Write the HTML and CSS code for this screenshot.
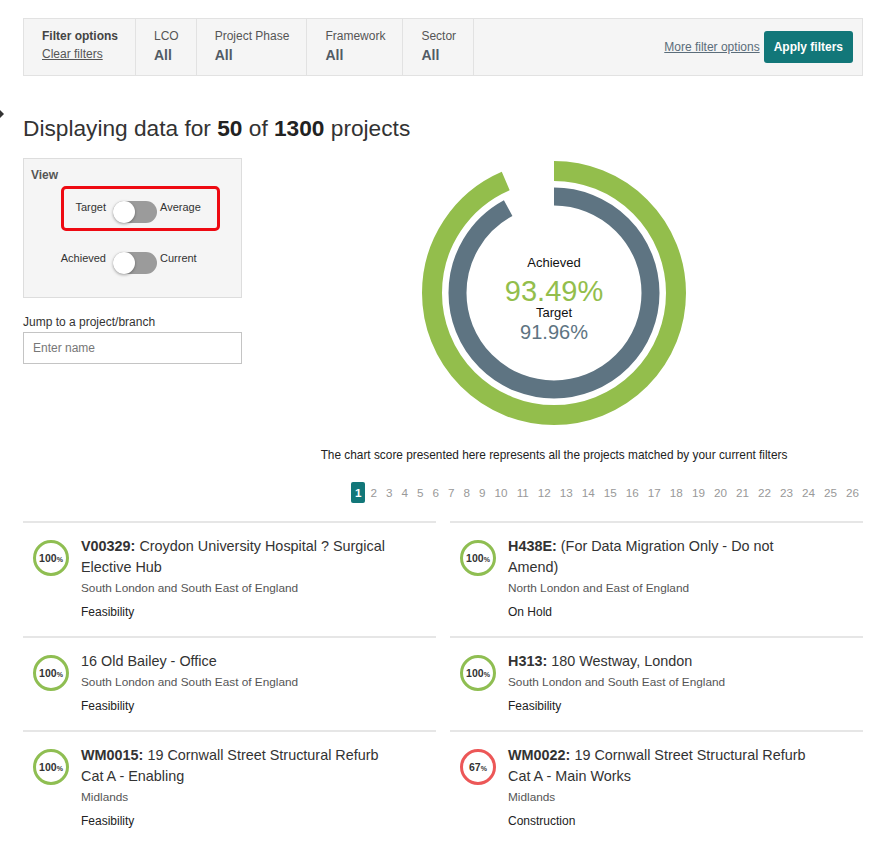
FILE: index.html
```html
<!DOCTYPE html>
<html lang="en">
<head>
  <meta charset="UTF-8" />
  <meta name="viewport" content="width=device-width, initial-scale=1.0"/>
  <title>Project Dashboard</title>
  <link rel="stylesheet" href="styles.css">
</head>
<body>

  <span class="side-tab"></span>

  <div class="page">

    <div class="filter-bar">
      <div class="filter-cell">
        <div class="filter-title">Filter options</div>
        <a class="clear-link" href="#">Clear filters</a>
      </div>
      <div class="filter-cell">
        <div class="filter-label">LCO</div>
        <div class="filter-value">All</div>
      </div>
      <div class="filter-cell">
        <div class="filter-label">Project Phase</div>
        <div class="filter-value">All</div>
      </div>
      <div class="filter-cell">
        <div class="filter-label">Framework</div>
        <div class="filter-value">All</div>
      </div>
      <div class="filter-cell">
        <div class="filter-label">Sector</div>
        <div class="filter-value">All</div>
      </div>
      <div class="filter-actions">
        <a class="more-link" href="#">More filter options</a>
        <button class="apply-btn">Apply filters</button>
      </div>
    </div>

    <h1 class="summary">Displaying data for <b>50</b> of <b>1300</b> projects</h1>

    <div class="overview">
      <div class="sidebar">
        <div class="view-panel">
          <div class="view-title">View</div>
          <div class="toggle-row highlight">
            <span class="toggle-left">Target</span>
            <span class="switch"><span class="knob"></span></span>
            <span class="toggle-right">Average</span>
          </div>
          <div class="toggle-row">
            <span class="toggle-left">Achieved</span>
            <span class="switch"><span class="knob"></span></span>
            <span class="toggle-right">Current</span>
          </div>
        </div>
        <label class="jump-label" for="jump">Jump to a project/branch</label>
        <input class="jump-input" id="jump" type="text" placeholder="Enter name" />
      </div>

      <div class="chart-area">
        <svg class="score-chart" width="264" height="264" viewBox="0 0 264 264">
          <circle class="ring-achieved" cx="132" cy="132" r="122" stroke-dasharray="716.6 766.5" transform="rotate(-90 132 132)" />
          <circle class="ring-target" cx="132" cy="132" r="96.5" stroke-dasharray="557.6 606.3" transform="rotate(-90 132 132)" />
          <text class="chart-label" x="132" y="105.5">Achieved</text>
          <text class="chart-main" x="132" y="139.5">93.49%</text>
          <text class="chart-label" x="132" y="155.5">Target</text>
          <text class="chart-sub" x="132" y="178">91.96%</text>
        </svg>
        <p class="chart-note">The chart score presented here represents all the projects matched by your current filters</p>
      </div>
    </div>

    <div class="pagination">
      <a class="page-link current">1</a>
      <a class="page-link">2</a>
      <a class="page-link">3</a>
      <a class="page-link">4</a>
      <a class="page-link">5</a>
      <a class="page-link">6</a>
      <a class="page-link">7</a>
      <a class="page-link">8</a>
      <a class="page-link">9</a>
      <a class="page-link">10</a>
      <a class="page-link">11</a>
      <a class="page-link">12</a>
      <a class="page-link">13</a>
      <a class="page-link">14</a>
      <a class="page-link">15</a>
      <a class="page-link">16</a>
      <a class="page-link">17</a>
      <a class="page-link">18</a>
      <a class="page-link">19</a>
      <a class="page-link">20</a>
      <a class="page-link">21</a>
      <a class="page-link">22</a>
      <a class="page-link">23</a>
      <a class="page-link">24</a>
      <a class="page-link">25</a>
      <a class="page-link">26</a>
    </div>

    <div class="project-list">
      <div class="project">
        <span class="badge">100<small>%</small></span>
        <div class="project-info">
          <div class="project-title"><b>V00329:</b> Croydon University Hospital ? Surgical Elective Hub</div>
          <div class="project-region">South London and South East of England</div>
          <div class="project-phase">Feasibility</div>
        </div>
      </div>
      <div class="project">
        <span class="badge">100<small>%</small></span>
        <div class="project-info">
          <div class="project-title"><b>H438E:</b> (For Data Migration Only - Do not Amend)</div>
          <div class="project-region">North London and East of England</div>
          <div class="project-phase">On Hold</div>
        </div>
      </div>
      <div class="project">
        <span class="badge">100<small>%</small></span>
        <div class="project-info">
          <div class="project-title">16 Old Bailey - Office</div>
          <div class="project-region">South London and South East of England</div>
          <div class="project-phase">Feasibility</div>
        </div>
      </div>
      <div class="project">
        <span class="badge">100<small>%</small></span>
        <div class="project-info">
          <div class="project-title"><b>H313:</b> 180 Westway, London</div>
          <div class="project-region">South London and South East of England</div>
          <div class="project-phase">Feasibility</div>
        </div>
      </div>
      <div class="project">
        <span class="badge">100<small>%</small></span>
        <div class="project-info">
          <div class="project-title"><b>WM0015:</b> 19 Cornwall Street Structural Refurb Cat A - Enabling</div>
          <div class="project-region">Midlands</div>
          <div class="project-phase">Feasibility</div>
        </div>
      </div>
      <div class="project">
        <span class="badge low">67<small>%</small></span>
        <div class="project-info">
          <div class="project-title"><b>WM0022:</b> 19 Cornwall Street Structural Refurb Cat A - Main Works</div>
          <div class="project-region">Midlands</div>
          <div class="project-phase">Construction</div>
        </div>
      </div>
    </div>

  </div>

</body>
</html>
```

FILE: styles.css
```css
body {
  margin: 0;
  font-family: "Liberation Sans", Arial, sans-serif;
  color: #333;
  background: #fff;
}
.side-tab {
  position: absolute;
  left: 0;
  top: 110px;
  border-left: 4px solid #333;
  border-top: 4px solid transparent;
  border-bottom: 4px solid transparent;
}
.page {
  width: 840px;
  margin-left: 23px;
  padding-top: 18px;
}

/* filter bar */
.filter-bar {
  display: flex;
  background: #f5f5f5;
  border: 1px solid #e2e2e2;
}
.filter-cell {
  padding: 9px 17px 11px 18px;
  border-right: 1px solid #e2e2e2;
}
.filter-title {
  font-size: 12px;
  line-height: 16px;
  font-weight: bold;
  color: #444;
}
.clear-link {
  display: block;
  margin-top: 2px;
  font-size: 12px;
  line-height: 16px;
  color: #555;
  text-decoration: underline;
}
.filter-label {
  font-size: 12px;
  line-height: 16px;
  color: #555;
}
.filter-value {
  margin-top: 3px;
  font-size: 14px;
  line-height: 17px;
  font-weight: bold;
  color: #515b64;
}
.filter-actions {
  margin-left: auto;
  display: flex;
  align-items: center;
  gap: 4px;
  padding-right: 9px;
}
.more-link {
  font-size: 12px;
  color: #5b6d7a;
  text-decoration: underline;
}
.apply-btn {
  height: 32px;
  padding: 0 10px;
  border: 0;
  border-radius: 3px;
  background: #127779;
  color: #fff;
  font: bold 12px "Liberation Sans", Arial, sans-serif;
  cursor: pointer;
}

.summary {
  margin: 39px 0 17px;
  font-size: 22.7px;
  line-height: 26px;
  font-weight: normal;
  color: #333;
}
.summary b {
  color: #222;
}

/* overview */
.overview {
  display: flex;
}
.sidebar {
  width: 219px;
  flex-shrink: 0;
}
.view-panel {
  background: #f5f5f5;
  border: 1px solid #ddd;
  padding: 8px 0 15px 7px;
}
.view-title {
  font-size: 12px;
  line-height: 16px;
  font-weight: bold;
  color: #555;
}
.toggle-row {
  display: grid;
  grid-template-columns: 42px auto auto;
  justify-content: start;
  align-items: start;
  box-sizing: border-box;
  width: 159px;
  margin: 6px 0 0 30px;
  padding: 12px 0 5px;
  border: 3px solid transparent;
  border-radius: 5px;
  font-size: 11px;
  line-height: 13px;
  color: #333;
}
.toggle-row.highlight {
  margin-top: 3px;
  border-color: #ee0a12;
}
.toggle-left {
  justify-self: end;
  white-space: nowrap;
}
.toggle-right {
  white-space: nowrap;
}
.switch {
  position: relative;
  width: 44px;
  height: 22px;
  margin: 0 3px 0 7px;
  border-radius: 11px;
  background: #9b9b9b;
}
.knob {
  position: absolute;
  left: 0;
  top: 0;
  width: 22px;
  height: 22px;
  border-radius: 50%;
  background: #fff;
  box-shadow: 0 1px 3px rgba(0,0,0,0.35);
}
.jump-label {
  display: block;
  margin-top: 16px;
  font-size: 12px;
  line-height: 16px;
  color: #333;
}
.jump-input {
  display: block;
  box-sizing: border-box;
  width: 219px;
  height: 32px;
  margin-top: 2px;
  padding: 0 9px;
  border: 1px solid #c4c4c4;
  font: 12px "Liberation Sans", Arial, sans-serif;
}
.jump-input::placeholder {
  color: #777;
}

.chart-area {
  flex: 1;
  padding-left: 3px;
}
.score-chart {
  display: block;
  margin: 3px auto 0;
}
.ring-achieved {
  fill: none;
  stroke: #93be4c;
  stroke-width: 20;
}
.ring-target {
  fill: none;
  stroke: #5e7482;
  stroke-width: 18;
}
.score-chart text {
  font-family: "Liberation Sans", Arial, sans-serif;
  text-anchor: middle;
}
.chart-label {
  font-size: 13px;
  fill: #111;
}
.chart-main {
  font-size: 29px;
  fill: #93be4c;
}
.chart-sub {
  font-size: 20px;
  fill: #5e7482;
}
.chart-note {
  margin: 22px 0 0;
  font-size: 11.85px;
  line-height: 16px;
  color: #222;
  text-align: center;
}

/* pagination */
.pagination {
  display: flex;
  justify-content: flex-end;
  gap: 1px;
  margin-top: 19px;
}
.page-link {
  padding: 0 4px;
  font-size: 11.7px;
  line-height: 21px;
  color: #999;
  cursor: pointer;
}
.page-link.current {
  background: #127779;
  color: #fff;
  font-weight: bold;
  border-radius: 2px;
}

/* project list */
.project-list {
  display: grid;
  grid-template-columns: 1fr 1fr;
  column-gap: 14px;
  margin-top: 18px;
}
.project {
  display: flex;
  align-items: flex-start;
  padding: 13px 0 14px 10px;
  border-top: 2px solid #e6e6e6;
}
.badge {
  display: flex;
  align-items: center;
  justify-content: center;
  flex-shrink: 0;
  box-sizing: border-box;
  width: 36px;
  height: 36px;
  margin: 4px 12px 0 0;
  border: 3px solid #8fbe52;
  border-radius: 50%;
  font-size: 10.5px;
  font-weight: bold;
  color: #333;
}
.badge small {
  font-size: 7px;
  margin-top: 2px;
}
.badge.low {
  border-color: #ec5757;
}
.project-info {
  max-width: 312px;
}
.project-title {
  font-size: 14.4px;
  line-height: 21px;
  color: #333;
}
.project-region {
  font-size: 11.8px;
  line-height: 20px;
  color: #555;
}
.project-phase {
  margin-top: 4px;
  font-size: 12px;
  line-height: 20px;
  color: #222;
}
```
